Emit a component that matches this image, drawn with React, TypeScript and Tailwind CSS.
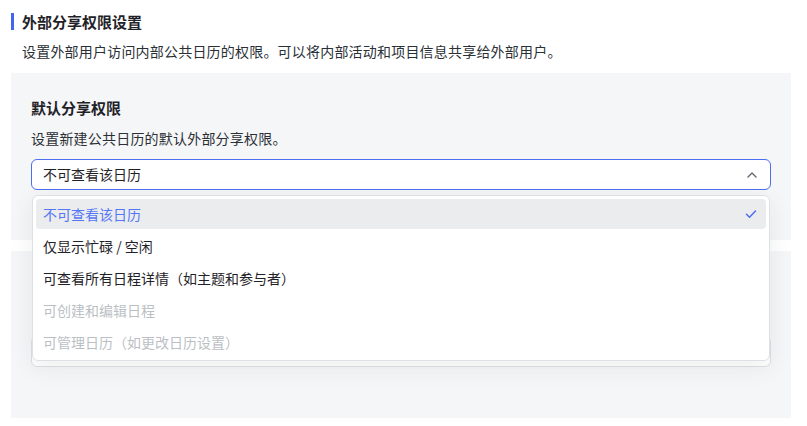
import { useState } from "react";

const OPTIONS = [
  { label: "不可查看该日历", disabled: false },
  { label: "仅显示忙碌 / 空闲", disabled: false },
  { label: "可查看所有日程详情（如主题和参与者）", disabled: false },
  { label: "可创建和编辑日程", disabled: true },
  { label: "可管理日历（如更改日历设置）", disabled: true },
];

const font = { fontFamily: '"Noto Sans CJK SC", "Noto Sans", sans-serif' };

const ChevronUp = () => (
  <svg width="12" height="12" viewBox="0 0 12 12" fill="none">
    <path d="M2 8l4-4 4 4" stroke="#646a73" strokeWidth="1.4" strokeLinecap="round" strokeLinejoin="round" />
  </svg>
);

const Check = () => (
  <svg width="12" height="12" viewBox="0 0 12 12" fill="none">
    <path d="M1.5 6.2l3 3 6-6.2" stroke="#4e6ef2" strokeWidth="1.5" strokeLinecap="round" strokeLinejoin="round" />
  </svg>
);

const App = () => {
  const [selected, setSelected] = useState(0);
  const [open, setOpen] = useState(true);

  return (
    <div className="w-[807px] h-[426px] bg-white px-[11px] overflow-hidden" style={font}>
      <div className="flex items-center pt-[13px]">
        <div className="w-[3px] h-[17px] bg-[#4264f0]" />
        <h2 className="ml-[8px] text-[15px] leading-[17px] font-semibold text-[#1f2329]">外部分享权限设置</h2>
      </div>
      <p className="mt-[10px] pl-[11px] text-[14px] leading-[22px] tracking-[0.2px] text-[#2b2f36]">
        设置外部用户访问内部公共日历的权限。可以将内部活动和项目信息共享给外部用户。
      </p>

      <section className="mt-[11px] w-[780px] h-[167px] bg-[#f5f6f7] px-[20px] pt-[24px]">
        <h3 className="text-[15px] leading-[22px] font-semibold text-[#1f2329]">默认分享权限</h3>
        <p className="mt-[8px] text-[14px] leading-[22px] tracking-[0.2px] text-[#2b2f36]">设置新建公共日历的默认外部分享权限。</p>
        <div className="relative mt-[10px]">
          <button
            onClick={() => setOpen((o) => !o)}
            className="w-full h-[31px] flex items-center justify-between bg-white border border-[#4e6ef2] rounded-[6px] pl-[11px] pr-[12px] text-[14px] text-[#1f2329]"
          >
            <span>{OPTIONS[selected].label}</span>
            <ChevronUp />
          </button>
          {open && (
            <ul className="absolute z-10 left-[1px] right-[1px] top-[36px] bg-white border border-[#dee0e3] rounded-[6px] p-[3px] flex flex-col gap-[2px] shadow-[0_6px_24px_rgba(31,35,41,0.08)]">
              {OPTIONS.map(({ label, disabled }, i) => (
                <li
                  key={i}
                  onClick={() => {
                    if (disabled) return;
                    setSelected(i);
                    setOpen(false);
                  }}
                  className={
                    "h-[30px] flex items-center justify-between rounded-[4px] pl-[7px] pr-[9px] text-[14px] " +
                    (i === selected
                      ? "bg-[#ebeced] text-[#5577f5]"
                      : disabled
                      ? "text-[#bbbfc4]"
                      : "text-[#1f2329]")
                  }
                >
                  <span>{label}</span>
                  {i === selected && <Check />}
                </li>
              ))}
            </ul>
          )}
        </div>
      </section>

      <section className="mt-[11px] w-[780px] h-[167px] bg-[#f5f6f7] px-[20px] pt-[85px]">
        <div className="h-[31px] bg-white border border-[#dee0e3] rounded-[6px]" />
      </section>
    </div>
  );
};

export default App;
